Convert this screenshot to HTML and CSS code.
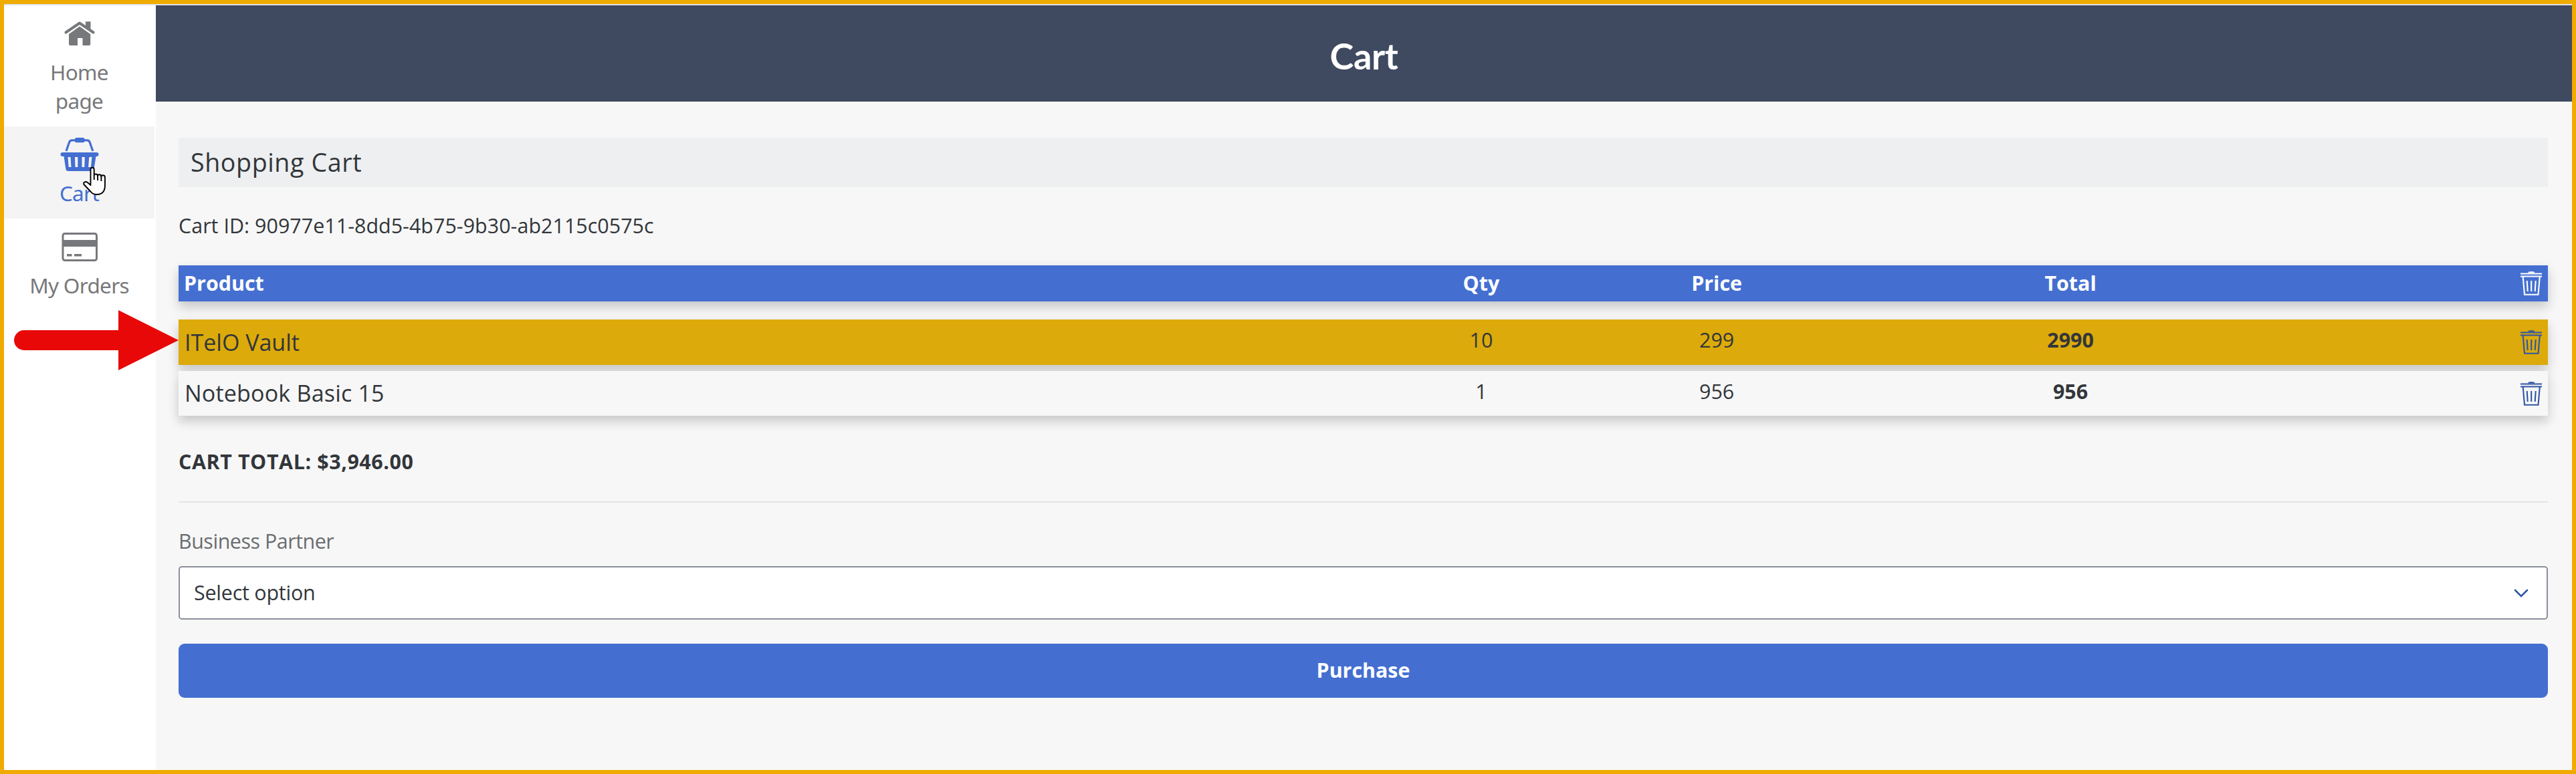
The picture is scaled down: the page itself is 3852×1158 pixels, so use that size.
FILE: index.html
```html
<!DOCTYPE html>
<html lang="en">
<head>
<meta charset="utf-8">
<title>Cart</title>
<link rel="stylesheet" href="styles.css">
</head>
<body>
<svg width="0" height="0" class="defs">
  <symbol id="trash" viewBox="0 0 32 36">
    <path d="M11 2.600Q11.500 .3 14 .3h4.500q2.500 0 3 2.300z" fill="currentColor"/>
    <path d="M0 3.500h32M0 7.500h32" stroke="currentColor" stroke-width="2" fill="none"/>
    <path d="M3.700 8l2.300 26.800h20.500L28.800 8M9.700 14l1 16M16.200 14v16M22.700 14l-1 16" stroke="currentColor" stroke-width="2.100" fill="none"/>
  </symbol>
</svg>
<div class="app">
  <nav class="side">
    <a class="nav">
      <svg width="58" height="50" viewBox="0 0 58 50"><path d="M8.500 23.500L29 9.500 49.500 23.500" fill="none" stroke="currentColor" stroke-width="4" stroke-linecap="round" stroke-linejoin="round"/><path d="M38 7.200h7.500v12.300L38 14.300zM29 14.500L45.200 26v15q0 2-2 2H33.500V32H26v11H15q-2 0-2-2V26z" fill="currentColor"/></svg>
      <span class="nav-text">Home<br>page</span>
    </a>
    <a class="nav active">
      <svg width="58" height="50" viewBox="0 0 58 50"><path d="M9 20L13.500 7Q14.500 3.800 18 3.800h22q3.500 0 4.300 3.200L48.800 20" fill="none" stroke="currentColor" stroke-width="3.200"/><rect x="22" y="0" width="14.500" height="7.200" rx="2.500" fill="currentColor"/><path fill-rule="evenodd" d="M3.500 22h51a3 3 0 0 1 0 6H53.500L50.500 47q-.6 3-3.500 3H12q-3 0-3.600-3L5.500 28H3.500a3 3 0 0 1 0-6zM11.500 29l1.200 15h3.800l-1-15zM22 29l.5 15h3.800V29zM32.500 29v15h3.800l.5-15zM43.300 29l-1.200 15h3.800l1.500-15z" fill="currentColor"/></svg>
      <span class="nav-text">Cart</span>
    </a>
    <a class="nav">
      <svg width="58" height="50" viewBox="0 0 58 50"><rect x="4" y="5.500" width="50.500" height="40" rx="3" fill="none" stroke="currentColor" stroke-width="3"/><path d="M3 15h52v10H3zM10 36h7.500v3.500H10zM21 36h11v3.500H21z" fill="currentColor"/></svg>
      <span class="nav-text">My Orders</span>
    </a>
  </nav>
  <div class="page">
    <header class="topbar"><h1 class="title">Cart</h1></header>
    <main class="main">
      <h2 class="section">Shopping Cart</h2>
      <p class="line cart-id">Cart ID: 90977e11-8dd5-4b75-9b30-ab2115c0575c</p>
      <div class="row head">
        <span class="name-head">Product</span><span class="num">Qty</span><span class="num">Price</span><span class="num">Total</span><svg class="trash" width="32" height="36"><use href="#trash"/></svg>
      </div>
      <div class="row item hot">
        <span class="name">ITelO Vault</span><span class="num">10</span><span class="num">299</span><b class="num">2990</b><svg class="trash" width="32" height="36"><use href="#trash"/></svg>
      </div>
      <div class="row item">
        <span class="name">Notebook Basic 15</span><span class="num">1</span><span class="num">956</span><b class="num">956</b><svg class="trash" width="32" height="36"><use href="#trash"/></svg>
      </div>
      <div class="rule"></div>
      <p class="line total">CART TOTAL: $3,946.00</p>
      <div class="rule"></div>
      <label class="line label">Business Partner</label>
      <div class="select"><span>Select option</span>
        <svg class="chevron" width="22" height="14" viewBox="0 0 22 14"><path d="M2 2l9 9 9-9" fill="none" stroke="#2f55a4" stroke-width="2.600" stroke-linecap="round"/></svg>
      </div>
      <button class="buy">Purchase</button>
    </main>
  </div>
  <svg class="arrow" width="246" height="90" viewBox="0 0 246 90"><path d="M15 30H156V0L246 45 156 90V60H15a15 15 0 0 1 0-30z" fill="#e90808"/></svg>
  <svg class="cursor" width="36" height="44" viewBox="0 0 36 44"><path d="M11.500 24V4.500q0-2.800 2.600-2.800t2.600 2.800V13q0-1.500 2.600-1.500 2.800 0 2.800 2.800 0-2 2.500-2 2.800 0 2.800 3 0-2 2.600-2 3 0 3 3.200V28q0 14-12.500 14-6 0-9.500-5L1.500 27q-1-2 .8-3.500 2-1.300 4.200.3 2 1.400 5 4.200z" fill="#fff" stroke="#000" stroke-width="1.900" stroke-linejoin="round"/><path d="M16.700 13v7M22.100 14v7M27.400 15v7" stroke="#000" stroke-width="1.900"/></svg>
</div>
</body>
</html>
```
FILE: styles.css
```css
* { box-sizing: border-box; }
body { margin: 0; font-family: "Open Sans", "Noto Sans", sans-serif; font-size: 30.4px; color: #32363a; }
h1, h2, p { margin: 0; }
.defs { position: absolute; }
.app { position: relative; width: 3852px; height: 1158px; border: 6px solid #f0ab00; display: flex; background: #f7f7f7; overflow: hidden; }
.side { width: 227px; background: #fff; border-top: 2px solid #e3e3e6; }
.nav { display: flex; flex-direction: column; align-items: center; gap: 12px; width: 225px; padding: 17px 0 16.4px; color: #77787b; font: 31.5px/42.6px "Noto Sans", sans-serif; letter-spacing: -.7px; text-align: center; }
.nav svg { display: block; }
.active { background: #f4f4f4; color: #446fd1; }
.page { flex: 1; border-top: 2px solid #e3e3e6; display: flex; flex-direction: column; }
.topbar { height: 144px; background: #3f4a61; display: flex; align-items: center; justify-content: center; padding-top: 7px; }
.title { font: bold 54px/64px Lato, sans-serif; letter-spacing: -.4px; color: #fff; }
.main { padding: 54px 36px 0 34px; display: flex; flex-direction: column; }
.section { height: 74px; line-height: 74px; background: #edeff1; font-size: 37.5px; font-weight: 400; letter-spacing: .65px; padding-left: 18px; }
.line { line-height: 40px; height: 40px; }
.cart-id { margin: 38px 0 39px; letter-spacing: .05px; }
.row { display: grid; grid-template-columns: 50% 9.96% 9.92% 19.94% 1fr; align-items: center; box-shadow: 0 8px 16px rgba(0, 0, 0, .2); background: #f7f7f7; }
.head { height: 54px; background: #446fd1; color: #fff; font-weight: 700; margin-bottom: 27px; padding-bottom: 1px; }
.name-head { padding-left: 8px; }
.item { height: 67px; margin-bottom: 9px; }
.hot { height: 68px; background: #dcaa0b; }
.name { font-size: 34px; letter-spacing: .2px; padding: 0 0 1px 9px; }
.hot .name { letter-spacing: 0; }
.num { text-align: center; padding-bottom: 7px; }
.head .num { padding-bottom: 0; }
.trash { justify-self: end; margin-right: 9px; color: #2f55a4; display: block; }
.head .trash { color: #fff; }
.rule { height: 2px; background: #e4e4e4; }
.total { margin: 38px 0 39px; font-weight: 700; letter-spacing: .6px; }
.label { margin: 38px 0 17px; color: #6a6d70; letter-spacing: -.45px; }
.select { height: 80px; background: #fff; border: 2px solid #8b8f9c; border-radius: 5px; padding: 0 27px 2px 21px; display: flex; align-items: center; justify-content: space-between; letter-spacing: -.2px; }
.chevron { margin-top: 4px; }
.buy { margin-top: 36px; height: 81px; border: 0; border-radius: 9px; background: #446fd1; color: #fff; font: bold 30.4px "Open Sans", sans-serif; padding: 0 0 2px; }
.arrow { position: absolute; left: 15px; top: 458px; }
.cursor { position: absolute; left: 118px; top: 243px; }
```
